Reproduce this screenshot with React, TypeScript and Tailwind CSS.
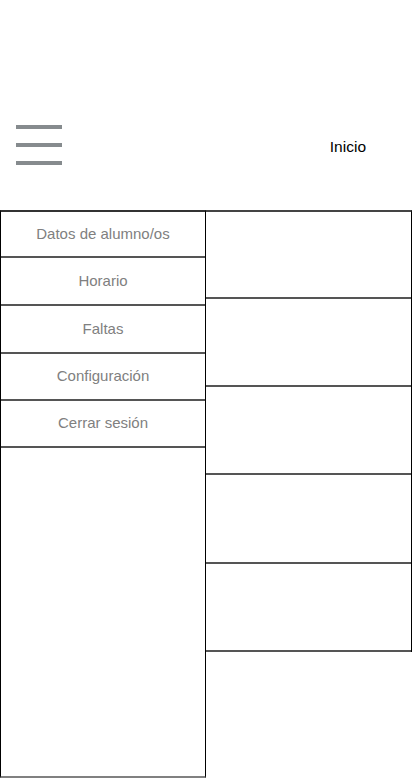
import React from 'react';

const menuItems = [
    { label: 'Datos de alumno/os', h: 'h-[46px]' },
    { label: 'Horario', h: 'h-[48px]' },
    { label: 'Faltas', h: 'h-[48px]' },
    { label: 'Configuración', h: 'h-[47px]' },
    { label: 'Cerrar sesión', h: 'h-[47px]' },
];

const panelHeights = ['h-[87px]', 'h-[88px]', 'h-[88px]', 'h-[89px]', 'h-[88px]'];

const App: React.FC = () => {
    return (
        <div className="w-[412px] h-[778px] bg-white flex flex-col font-['Liberation_Sans',Arial,sans-serif]">
            {/* Header */}
            <div className="h-[210px] flex items-start pt-[125px]">
                <div className="ml-4 w-[46px] flex flex-col gap-[14px]">
                    <div className="h-1 bg-[#868b8e]" />
                    <div className="h-1 bg-[#868b8e]" />
                    <div className="h-1 bg-[#868b8e]" />
                </div>
                <div className="ml-auto mr-[46px] mt-[14px] text-[15.5px] leading-none text-black">Inicio</div>
            </div>

            {/* Body */}
            <div className="flex items-start">
                {/* Menu - Left Panel */}
                <div className="w-[206px] h-[568px] flex-shrink-0 border-x border-t-2 border-t-[#333] border-x-black border-b-2 border-b-[#808080] flex flex-col">
                    {menuItems.map((item) => (
                        <div
                            key={item.label}
                            className={`${item.h} flex items-center justify-center border-b-2 border-[#555] text-[15px] text-[#808080]`}
                        >
                            {item.label}
                        </div>
                    ))}
                </div>

                {/* Content - Right Panel */}
                <div className="w-[206px] flex flex-col border-t-2 border-t-[#444] border-r border-r-black">
                    {panelHeights.map((h, i) => (
                        <div key={i} className={`${h} border-b-2 border-[#555]`} />
                    ))}
                </div>
            </div>
        </div>
    );
};

export default App;
